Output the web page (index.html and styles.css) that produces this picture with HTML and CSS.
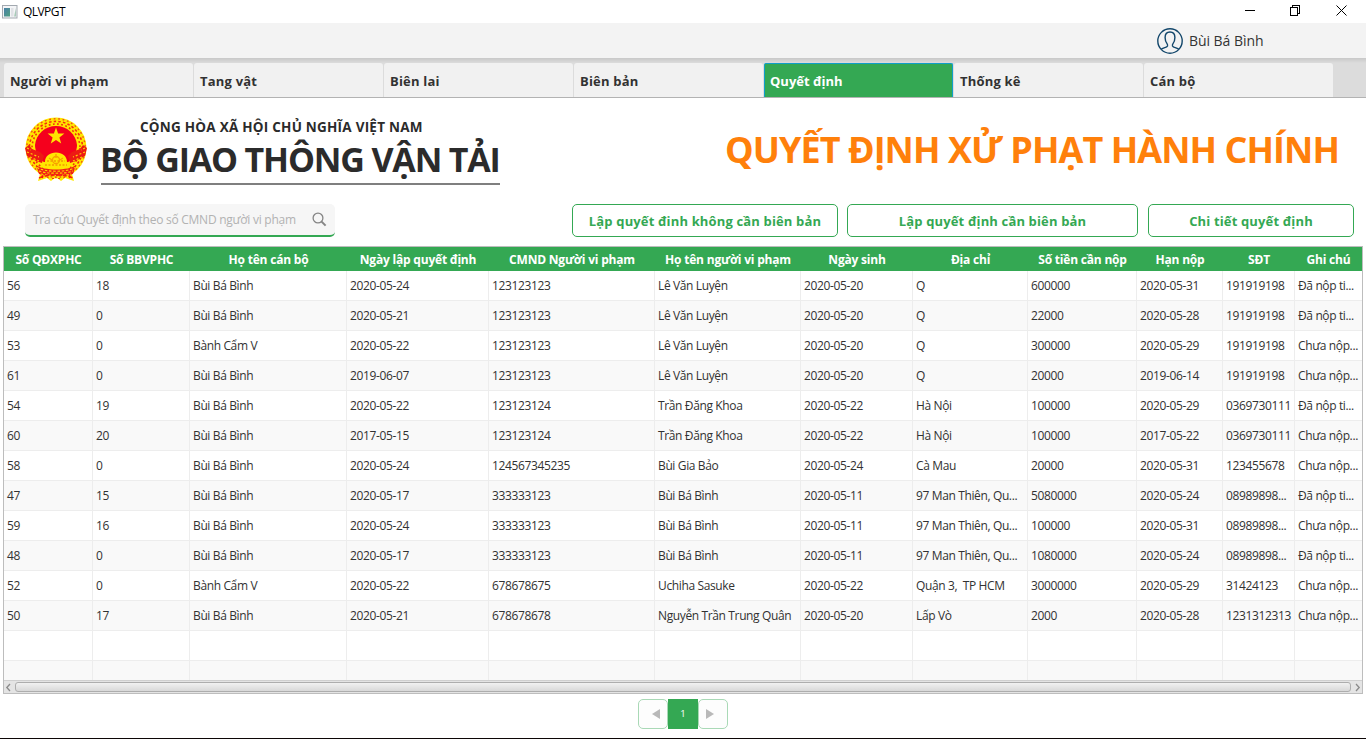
FILE: index.html
```html
<!DOCTYPE html>
<html lang="vi">
<head>
<meta charset="utf-8">
<title>QLVPGT</title>
<link rel="stylesheet" href="styles.css">
</head>
<body>
<div class="window">
  <header class="titlebar">
    <svg class="app-icon" width="16" height="14" viewBox="0 0 16 14">
      <defs><linearGradient id="pane" x1="0" y1="0" x2="1" y2="1"><stop offset="0" stop-color="#4a7fa8"/><stop offset="1" stop-color="#4fa080"/></linearGradient></defs>
      <rect x="0.5" y="0.5" width="14.500" height="12.500" fill="#f4f5f7" stroke="#a3a9b0"/>
      <rect x="2" y="3" width="6" height="8.500" fill="url(#pane)"/>
      <rect x="9" y="3" width="2.500" height="8.500" fill="#e0e2e6"/>
      <path d="M14 3v8.500h-2z" fill="#a9cbb9"/>
    </svg>
    <span class="app-name">QLVPGT</span>
    <svg class="win-controls" width="110" height="12" viewBox="0 0 110 12" fill="none" stroke="#000" shape-rendering="crispEdges">
      <path d="M1 6.500h10"/>
      <path d="M46.500 3.500h7v8h-7zM48.500 3.500v-2h7v8h-2"/>
      <path d="M92.500 1.500l10 10M102.500 1.500l-10 10" shape-rendering="auto"/>
    </svg>
  </header>

  <div class="userbar">
    <svg class="avatar" width="26" height="26" viewBox="0 0 26 26" fill="none" stroke="#13476b" stroke-width="1.400">
      <circle cx="13" cy="13" r="12.200"/>
      <path d="M4.200 21.200c1.500-1.200 5.800-1.700 6.300-3.200.2-.8 0-1.600-.5-2.300-1.200-1.600-1.900-3.700-1.900-6.200C8.100 6 9.700 4 13 4s4.900 2 4.900 5.500c0 2.500-.7 4.600-1.900 6.200-.5.700-.7 1.500-.5 2.300.5 1.500 4.800 2 6.300 3.200"/>
    </svg>
    <span class="user-name">Bùi Bá Bình</span>
  </div>

  <nav class="tabs">
    <div class="tab">Người vi phạm</div>
    <div class="tab">Tang vật</div>
    <div class="tab">Biên lai</div>
    <div class="tab">Biên bản</div>
    <div class="tab selected">Quyết định</div>
    <div class="tab">Thống kê</div>
    <div class="tab">Cán bộ</div>
  </nav>

  <section class="banner">
    <svg class="emblem" width="64" height="66" viewBox="0 0 64 66">
      <path d="M18 50L14 64l9-3 4 3 5-4 5 4 4-3 9 3-4-14z" fill="#ffea00"/>
      <path d="M20 54l-2 7M25 55l-1 6M29 56v6M35 56v6M39 55l1 6M44 54l2 7" stroke="#f5001d" stroke-width="2"/>
      <circle cx="32" cy="31" r="30.500" fill="#ffe600"/>
      <circle cx="32" cy="31" r="29.200" fill="none" stroke="#f0501a" stroke-width="1.400" stroke-dasharray="1.800 2.700"/>
      <circle cx="32" cy="31" r="26.600" fill="none" stroke="#f5300f" stroke-width="1.600" stroke-dasharray="2.500 2.200"/>
      <circle cx="32" cy="31" r="24" fill="none" stroke="#f5300f" stroke-width="1.600" stroke-dasharray="1.800 2.400"/>
      <path d="M32 9c11 0 20 8 21 19 0 7-4 14-10 18H21c-6-4-10-11-10-18C12 17 21 9 32 9z" fill="#f5001d"/>
      <path d="M32 10.500l2.100 5.900 6.300.2-5 3.800 1.800 6-5.200-3.500-5.200 3.500 1.800-6-5-3.800 6.300-.2z" fill="#ffe600"/>
      <path d="M1 31l4-3 3 4 8 3 4 4-2 7-6-2-9-5zM63 31l-4-3-3 4-8 3-4 4 2 7 6-2 9-5z" fill="#ed1a14"/>
      <path d="M3 35l12 5M6 40l9 4M3 31l4 2M61 35l-12 5M58 40l-9 4M61 31l-4 2" stroke="#ffd200" stroke-width="1.200" stroke-dasharray="2 2"/>
      <path d="M17 49c0-3 2-4 4-4 0-6 5-9.500 11-9.500S43 39 43 45c2 0 4 1 4 4l-4 4H21z" fill="#ffe600"/>
      <path d="M23 44h18M21 48h22" stroke="#f39b00" stroke-width="1.500" stroke-dasharray="2 1.500"/>
      <path d="M25 41l3 2M39 41l-3 2M32 37v4" stroke="#f8a000" stroke-width="1.300"/>
      <circle cx="32" cy="43" r="3.500" fill="none" stroke="#f8a000" stroke-width="1.300"/>
      <path d="M12 48c7 6 33 6 40 0l-3 9c-8 3-26 3-34 0z" fill="#f02015"/>
      <path d="M13 50.500c8 5 30 5 38 0M15 54c8 3 26 3 34 0M17 57c8 2 22 2 30 0" fill="none" stroke="#ffd200" stroke-width="1.200" stroke-dasharray="2.500 1.700"/>
      <path d="M15 61c10-4 24-4 34 0" fill="none" stroke="#f5200f" stroke-width="1.500" stroke-dasharray="4 2"/>
    </svg>
    <div class="ministry">
      <div class="nation">CỘNG HÒA XÃ HỘI CHỦ NGHĨA VIỆT NAM</div>
      <div class="ministry-name">BỘ GIAO THÔNG VẬN TẢI</div>
    </div>
    <h1 class="page-title">QUYẾT ĐỊNH XỬ PHẠT HÀNH CHÍNH</h1>
  </section>

  <section class="actions">
    <div class="search">
      <span class="placeholder">Tra cứu Quyết định theo số CMND người vi phạm</span>
      <svg width="15" height="15" viewBox="0 0 15 15" fill="none" stroke="#858585">
        <circle cx="6" cy="6" r="4.900" stroke-width="1.300"/><path d="M9.600 9.600l4 4" stroke-width="2"/>
      </svg>
    </div>
    <button class="btn btn-a">Lập quyết đinh không cần biên bản</button>
    <button class="btn btn-b">Lập quyết định cần biên bản</button>
    <button class="btn btn-c">Chi tiết quyết định</button>
  </section>

  <section class="grid">
    <div class="grid-body" id="rows">
      <div class="row head"><div>Số QĐXPHC</div><div>Số BBVPHC</div><div>Họ tên cán bộ</div><div>Ngày lập quyết định</div><div>CMND Người vi phạm</div><div>Họ tên người vi phạm</div><div>Ngày sinh</div><div>Địa chỉ</div><div>Số tiền cần nộp</div><div>Hạn nộp</div><div>SĐT</div><div>Ghi chú</div></div>
    </div>
    <div class="scrollbar">
      <svg width="11" height="13" viewBox="0 0 11 13" fill="none" stroke="#8a8a8a" stroke-width="1.300"><path d="M6 3L2.800 6.500 6 10"/></svg>
      <div class="thumb"></div>
      <svg width="11" height="13" viewBox="0 0 11 13" fill="none" stroke="#8a8a8a" stroke-width="1.300"><path d="M5 3l3.200 3.500L5 10"/></svg>
    </div>
  </section>

  <footer class="pager">
    <div class="page-arrow prev"><svg width="8" height="10" viewBox="0 0 8 10"><path d="M8 0v10L0 5z" fill="#b9b9b9"/></svg></div>
    <div class="page-current">1</div>
    <div class="page-arrow next"><svg width="8" height="10" viewBox="0 0 8 10"><path d="M0 0v10l8-5z" fill="#b9b9b9"/></svg></div>
  </footer>
</div>
<script src="table.js"></script>
</body>
</html>
```

FILE: table.js
```js
const records = [
  ["56", "18", "Bùi Bá Bình", "2020-05-24", "123123123", "Lê Văn Luyện", "2020-05-20", "Q", "600000", "2020-05-31", "191919198", "Đã nộp ti..."],
  ["49", "0", "Bùi Bá Bình", "2020-05-21", "123123123", "Lê Văn Luyện", "2020-05-20", "Q", "22000", "2020-05-28", "191919198", "Đã nộp ti..."],
  ["53", "0", "Bành Cẩm V", "2020-05-22", "123123123", "Lê Văn Luyện", "2020-05-20", "Q", "300000", "2020-05-29", "191919198", "Chưa nộp..."],
  ["61", "0", "Bùi Bá Bình", "2019-06-07", "123123123", "Lê Văn Luyện", "2020-05-20", "Q", "20000", "2019-06-14", "191919198", "Chưa nộp..."],
  ["54", "19", "Bùi Bá Bình", "2020-05-22", "123123124", "Trần Đăng Khoa", "2020-05-22", "Hà Nội", "100000", "2020-05-29", "0369730111", "Đã nộp ti..."],
  ["60", "20", "Bùi Bá Bình", "2017-05-15", "123123124", "Trần Đăng Khoa", "2020-05-22", "Hà Nội", "100000", "2017-05-22", "0369730111", "Chưa nộp..."],
  ["58", "0", "Bùi Bá Bình", "2020-05-24", "124567345235", "Bùi Gia Bảo", "2020-05-24", "Cà Mau", "20000", "2020-05-31", "123455678", "Chưa nộp..."],
  ["47", "15", "Bùi Bá Bình", "2020-05-17", "333333123", "Bùi Bá Bình", "2020-05-11", "97 Man Thiên, Qu...", "5080000", "2020-05-24", "08989898...", "Đã nộp ti..."],
  ["59", "16", "Bùi Bá Bình", "2020-05-24", "333333123", "Bùi Bá Bình", "2020-05-11", "97 Man Thiên, Qu...", "100000", "2020-05-31", "08989898...", "Chưa nộp..."],
  ["48", "0", "Bùi Bá Bình", "2020-05-17", "333333123", "Bùi Bá Bình", "2020-05-11", "97 Man Thiên, Qu...", "1080000", "2020-05-24", "08989898...", "Đã nộp ti..."],
  ["52", "0", "Bành Cẩm V", "2020-05-22", "678678675", "Uchiha Sasuke", "2020-05-22", "Quận 3,  TP HCM", "3000000", "2020-05-29", "31424123", "Chưa nộp..."],
  ["50", "17", "Bùi Bá Bình", "2020-05-21", "678678678", "Nguyễn Trần Trung Quân", "2020-05-20", "Lấp Vò", "2000", "2020-05-28", "1231312313", "Chưa nộp..."],
  Array(12).fill(""),
  Array(12).fill("")
];

const body = document.getElementById("rows");
for (const record of records) {
  const row = document.createElement("div");
  row.className = "row";
  for (const value of record) {
    const cell = document.createElement("div");
    cell.textContent = value;
    row.append(cell);
  }
  body.append(row);
}
```

FILE: styles.css
```css
* { box-sizing: border-box; }
body { margin: 0; background: #fff; color: #323232; font-family: "Open Sans", "Noto Sans", sans-serif; }
.window { width: 1366px; height: 739px; display: flex; flex-direction: column; overflow: hidden; border-bottom: 1px solid #0c0606; }
.titlebar { height: 23px; flex: none; display: flex; align-items: center; padding: 0 18px 0 2px; }
.app-name { margin-left: 5px; font-size: 12px; color: #000; letter-spacing: -0.55px; flex: 1; }
.win-controls { margin-bottom: 3px; margin-right: -6px; }
.userbar { height: 35px; flex: none; background: #f3f3f3; display: flex; align-items: center; padding-left: 1157px; }
.user-name { margin-left: 6px; font-size: 14px; letter-spacing: -0.05px; color: #333; white-space: nowrap; }
.tabs { height: 40px; flex: none; display: flex; gap: 1px; padding: 5px 4px 0; background: linear-gradient(#c8c8c8, #dcdcdc 5px); border-bottom: 1px solid #b3b3b3; }
.tab { width: 189px; padding: 1px 0 0 6px; line-height: 34px; font-size: 13px; font-weight: 700; background: #f1f1f1; border-radius: 3px 3px 0 0; letter-spacing: 0.2px; }
.tab.selected { background: #34a853; color: #fff; border: solid #0f9fc8; border-width: 1px 1px 0; padding: 0 0 0 5px; border-radius: 2px 2px 0 0; letter-spacing: 0; }
.banner { height: 97px; flex: none; display: flex; padding: 19px 27px 0 24px; }
.ministry { margin-left: 13px; width: 399px; height: 68px; border-bottom: 2px solid #7f7f7f; color: #2b2b2b; white-space: nowrap; }
.nation { font-size: 13.5px; font-weight: 700; line-height: 20px; padding-left: 39px; letter-spacing: 0.24px; }
.ministry-name { font-size: 34px; font-weight: 700; line-height: 45px; letter-spacing: -1.17px; margin-left: -1px; }
.page-title { margin: 7px 0 0 auto; font-size: 36px; line-height: 52px; font-weight: 700; color: #ff800b; letter-spacing: -0.95px; white-space: nowrap; }
.actions { height: 51px; flex: none; display: flex; padding: 9px 12px 0 25px; }
.search { width: 310px; height: 33px; background: #f6f6f6; border-radius: 5px; border-bottom: 2px solid #34a853; display: flex; align-items: center; justify-content: space-between; padding: 0 8px; font-size: 12px; color: #b2b2b2; letter-spacing: -0.26px; white-space: nowrap; margin-right: 237px; }
.btn { height: 33px; padding: 0; background: #fff; border: 1px solid #34a853; border-radius: 5px; color: #34a853; font: 700 13px "Open Sans", "Noto Sans", sans-serif; letter-spacing: 0.15px; white-space: nowrap; }
.btn-a { width: 266px; }
.btn-b { width: 291px; margin-left: 9px; }
.btn-c { width: 206px; margin-left: 10px; }
.grid { width: 1360px; height: 448px; flex: none; margin-left: 3px; border: 1px solid #bdbdbd; display: flex; flex-direction: column; }
.grid-body { height: 433px; overflow: hidden; }
.row { display: grid; grid-template-columns: 89px 97px 157px 142px 166px 146px 112px 115px 109px 86px 72px 67px; height: 30px; border-bottom: 1px solid #ededed; }
.row > div { border-right: 1px solid #ededed; padding-left: 3px; font-size: 12px; line-height: 29px; letter-spacing: -0.37px; white-space: pre; overflow: hidden; }
.row > div:last-child { border-right: 0; }
.row:nth-child(odd) { background: #f9f9f9; }
.row.head { height: 24px; border: 0; background: #34a853; color: #fff; }
.row.head > div { border: 0; padding: 0; line-height: 25px; font-size: 12px; font-weight: 700; text-align: center; letter-spacing: -0.2px; }
.scrollbar { height: 13px; display: flex; align-items: center; background: #e4e4e4; border-top: 1px solid #cfcfcf; }
.thumb { flex: 1; height: 10px; border: 1px solid #adadad; border-radius: 3px; background: linear-gradient(#f1f1f1, #d8d8d8); }
.pager { display: flex; justify-content: center; padding-top: 5px; }
.page-arrow { width: 30px; height: 30px; border: 1px solid #a9d9b6; border-radius: 5px; background: #fdfdfd; display: flex; align-items: center; }
.prev { padding-left: 13px; }
.next { padding-left: 7px; }
.page-current { width: 30px; height: 30px; background: #34a853; color: #fff; font-size: 9.5px; line-height: 30px; text-align: center; }
```
